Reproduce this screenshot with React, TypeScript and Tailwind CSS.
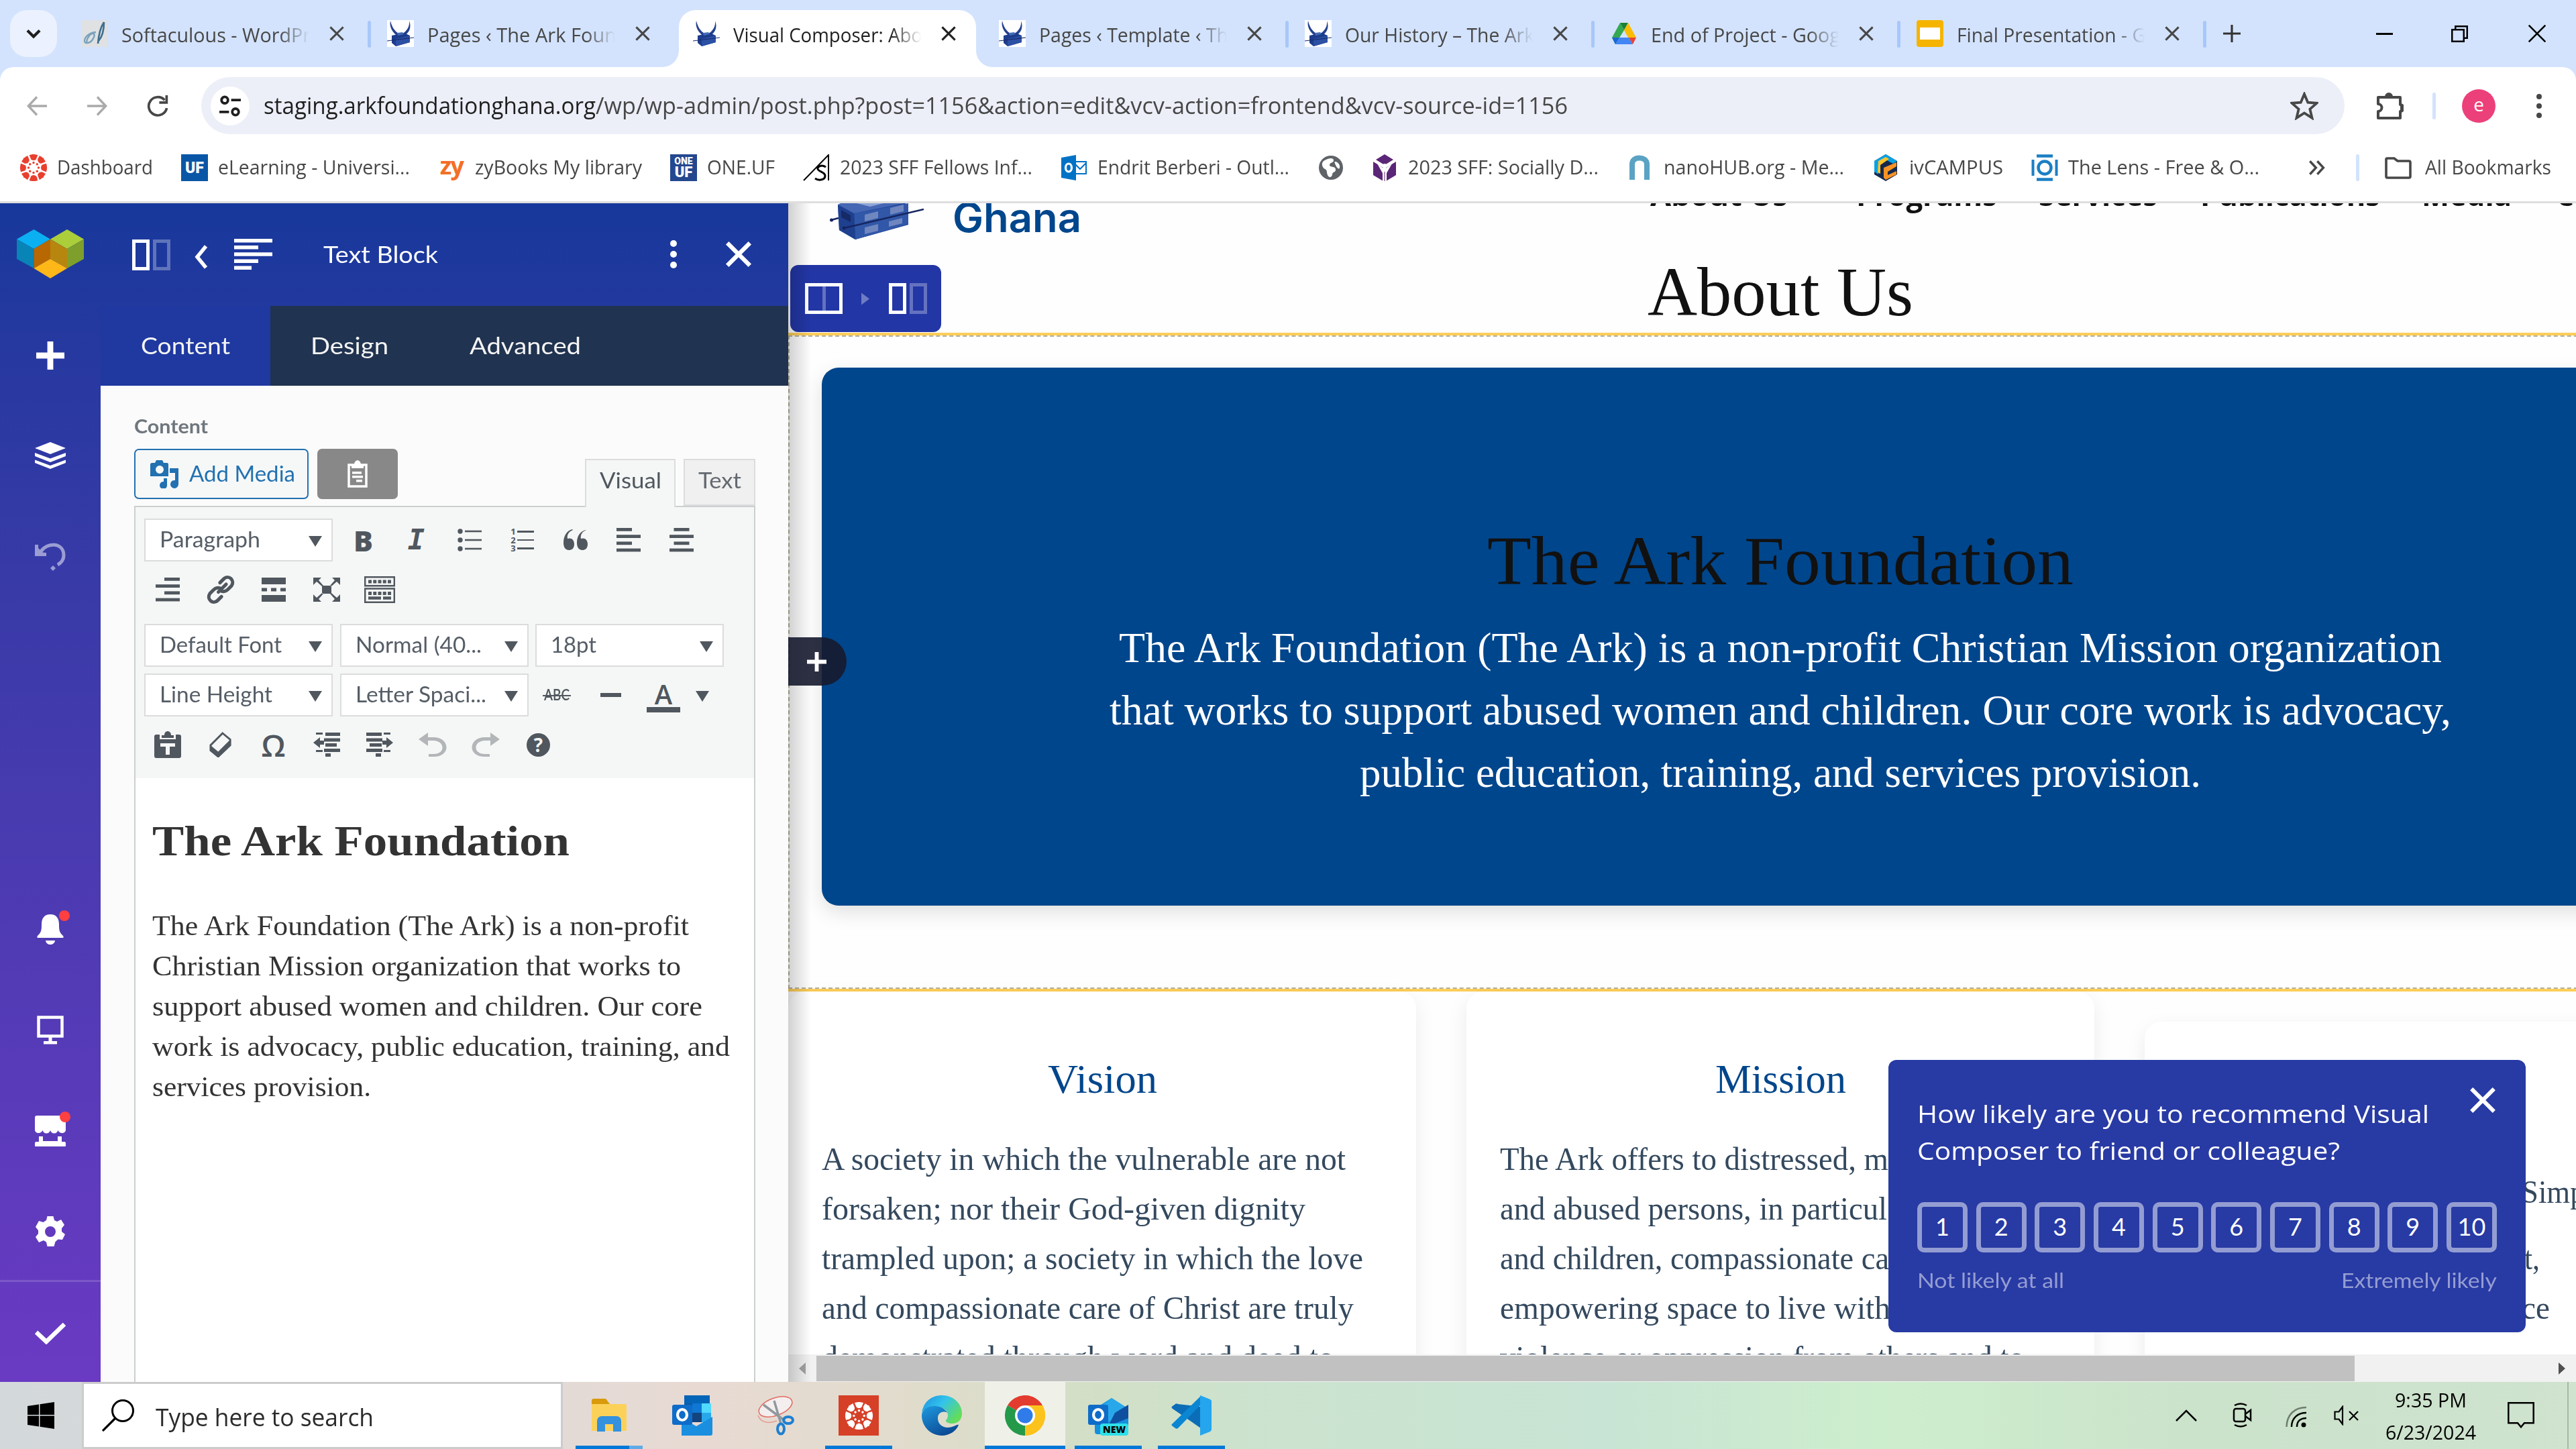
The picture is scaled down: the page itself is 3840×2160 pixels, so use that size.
import React, { useLayoutEffect, useRef } from "react";

const SEGOE = "font-['Open_Sans','Noto_Sans',sans-serif]";
const NUNITO = "font-['Lato','Open_Sans',sans-serif]";
const SERIF = "font-['Liberation_Serif',serif]";

type Kids = { className?: string; children?: React.ReactNode };

/* One line of text stretched to the width of its box. */
function Fit({ className = "", children }: Kids) {
  const box = useRef<HTMLSpanElement>(null);
  const inner = useRef<HTMLSpanElement>(null);
  useLayoutEffect(() => {
    if (!box.current || !inner.current) return;
    inner.current.style.transform = "none";
    const natural = inner.current.getBoundingClientRect().width;
    const wanted = box.current.getBoundingClientRect().width;
    if (natural > 0) inner.current.style.transform = `scaleX(${wanted / natural})`;
  });
  return (
    <span ref={box} className={`block shrink-0 ${className}`}>
      <span ref={inner} className="inline-block origin-left whitespace-pre">{children}</span>
    </span>
  );
}

function Svg({ vb = "0 0 20 20", className = "", children }: Kids & { vb?: string }) {
  return (
    <svg viewBox={vb} className={`block shrink-0 ${className}`} fill="currentColor">{children}</svg>
  );
}

const X = ({ className = "", w = 2 }: { className?: string; w?: number }) => (
  <Svg className={className}>
    <path d="M2 2 18 18M18 2 2 18" stroke="currentColor" strokeWidth={w} fill="none" />
  </Svg>
);

/* ---------- browser chrome ---------- */

const Ark = ({ bg = true }: { bg?: boolean }) => (
  <Svg vb="0 0 40 40" className="size-[40px]">
    {bg && <rect width="40" height="40" fill="#fff" />}
    <path d="M5 1C3 9 7 18 17 25l2-4C10 16 7 9 5 1ZM33 1c1 8-3 15-11 20l1 4C33 20 37 11 33 1Z" fill="#24418f" />
    <path d="m7 23 18-4 9 4v10l-21 6-6-5Z" fill="#1d3c8c" />
    <path d="m13 28 21-5v10l-21 6Z" fill="#2b50a4" />
    <path d="M0 31 40 26" stroke="#16296b" strokeWidth="1.2" />
    <path d="m15 19 8-1 2 3-9 2Z" fill="#456bb8" />
  </Svg>
);

const Feather = () => (
  <Svg vb="0 0 40 40" className="size-[40px]">
    <rect width="40" height="40" fill="#dfe1e3" />
    <path d="M34 3C28 12 26 22 25 35M34 3c0 14-3 22-8 28" stroke="#3f6f8f" strokeWidth="2.6" fill="none" />
    <path d="M22 18c-8 0-16 6-17 12s8 5 12-1 3-9 0-9-9 7-9 13" stroke="#7ba3bd" strokeWidth="2.4" fill="none" />
  </Svg>
);

const Drive = () => (
  <Svg vb="0 0 40 40" className="size-[40px]">
    <path d="M14 4h12l-6 11Z" fill="#188038" />
    <path d="M14 4 2 26l5 10 13-21Z" fill="#34a853" />
    <path d="m26 4 12 22H26L20 15Z" fill="#fbbc04" />
    <path d="M2 26h11l-6 10Z" fill="#1967d2" />
    <path d="M13 26h14l6 10H7Z" fill="#4285f4" />
    <path d="M27 26h11l-5 10Z" fill="#ea4335" />
  </Svg>
);

const Slides = () => (
  <Svg vb="0 0 40 40" className="size-[40px]">
    <rect width="40" height="40" rx="4" fill="#f5b400" />
    <rect x="5" y="11" width="30" height="18" fill="#fff" />
  </Svg>
);

const tabs = [
  { icon: <Feather />, title: "Softaculous - WordPr", sep: true },
  { icon: <Ark />, title: "Pages ‹ The Ark Foun", sep: false },
  { icon: <Ark bg={false} />, title: "Visual Composer: Abo", sep: false, active: true },
  { icon: <Ark />, title: "Pages ‹ Template ‹ Th", sep: true },
  { icon: <Ark />, title: "Our History – The Ark", sep: true },
  { icon: <Drive />, title: "End of Project - Goog", sep: true },
  { icon: <Slides />, title: "Final Presentation - G", sep: true },
];

function TabStrip() {
  return (
    <div className="flex h-[100px] bg-[#d3e3fd] pl-[15px] text-[#474747]">
      <div className="mt-[15px] flex size-[70px] items-center justify-center rounded-[25px] bg-[#ebf1fe] text-[#1f1f1f]">
        <Svg className="size-[26px]">
          <path d="m3 6.500 7 7 7-7" fill="none" stroke="currentColor" strokeWidth="3.200" />
        </Svg>
      </div>
      <div className="ml-[15px] flex">
        {tabs.map((t, i) => (
          <div key={i} className="flex w-[456px] shrink-0">
            <div
              className={
                t.active
                  ? "relative mt-[15px] flex w-[443px] items-center rounded-t-[25px] bg-white pb-[15px] pl-[21px] text-[#1f1f1f]"
                  : "flex w-[443px] items-center pl-[21px]"
              }
            >
              {t.active && (
                <>
                  <Svg vb="0 0 25 25" className="absolute bottom-0 -left-[25px] size-[25px] text-white">
                    <path d="M25 0v25H0C14 25 25 14 25 0Z" />
                  </Svg>
                  <Svg vb="0 0 25 25" className="absolute -right-[25px] bottom-0 size-[25px] text-white">
                    <path d="M0 0v25h25C11 25 0 14 0 0Z" />
                  </Svg>
                </>
              )}
              {t.icon}
              <div className="ml-[20px] w-[280px] overflow-hidden [mask-image:linear-gradient(to_right,black_84%,transparent)]">
                <Fit className="mt-[4px] w-[282px] text-[29px] leading-[44px]">{t.title}</Fit>
              </div>
              <X className="ml-[29px] size-[24px]" w={2.5} />
            </div>
            {t.sep && <div className="mt-[31px] ml-[5px] h-[40px] w-[5px] rounded-full bg-[#a8c7fa]" />}
          </div>
        ))}
      </div>
      <div className="ml-[22px] flex items-center text-black">
        <Svg className="size-[26px] text-[#333]">
          <path d="M8.800 0h2.400v20H8.800zM0 8.800h20v2.400H0z" />
        </Svg>
        <div className="ml-[202px] h-[3px] w-[25px] bg-black" />
        <Svg className="ml-[87px] size-[25px]">
          <path d="M1 5h14v14H1zM5 5V1h14v14h-4" fill="none" stroke="currentColor" strokeWidth="2" />
        </Svg>
        <Svg className="ml-[90px] size-[26px]">
          <path d="m.5.500 19 19m0-19-19 19" fill="none" stroke="currentColor" strokeWidth="2" />
        </Svg>
      </div>
    </div>
  );
}

function Toolbar() {
  return (
    <div className="bg-[#d3e3fd]">
      <div className="flex h-[115px] items-center rounded-t-[20px] bg-white pl-[40px] text-[#474747]">
        <Svg className="size-[30px] text-[#aaaaaa]">
          <path d="M20 10H2M10 1 1.500 10l8.500 9" fill="none" stroke="currentColor" strokeWidth="2.200" />
        </Svg>
        <Svg className="ml-[60px] size-[30px] text-[#aaaaaa]">
          <path d="M0 10h18M10 1l8.500 9-8.500 9" fill="none" stroke="currentColor" strokeWidth="2.200" />
        </Svg>
        <Svg className="ml-[59px] size-[32px]">
          <path d="M16.500 4.500A8.500 8.500 0 1 0 18.500 12" fill="none" stroke="currentColor" strokeWidth="2.300" />
          <path d="M19.500 0v8h-8V5.700h5.700V0z" />
        </Svg>
        <div className="ml-[49px] flex h-[85px] w-[3195px] items-center rounded-full bg-[#eceff8] pl-[14px]">
          <div className="flex size-[58px] items-center justify-center rounded-full bg-white text-[#1f1f1f]">
            <Svg className="size-[32px]">
              <path d="M11 4.500h9M0 15.500h9" stroke="currentColor" strokeWidth="2.400" />
              <circle cx="5" cy="4.500" r="3" fill="none" stroke="currentColor" strokeWidth="2.400" />
              <circle cx="15" cy="15.500" r="3" fill="none" stroke="currentColor" strokeWidth="2.400" />
            </Svg>
          </div>
          <Fit className="mt-[-2px] ml-[21px] w-[495px] text-[34px] leading-[50px] text-[#1f1f1f]">staging.arkfoundationghana.org</Fit>
          <Fit className="mt-[-2px] w-[1449px] text-[34px] leading-[50px] text-[#474747]">
            /wp/wp-admin/post.php?post=1156&amp;action=edit&amp;vcv-action=frontend&amp;vcv-source-id=1156
          </Fit>
          <Svg className="ml-auto mr-[39px] size-[42px]">
            <path d="m10 1.500 2.500 6 6.300.5-4.800 4.200 1.500 6.300L10 15l-5.500 3.500L6 12.200 1.200 8l6.300-.5Z" fill="none" stroke="currentColor" strokeWidth="1.800" />
          </Svg>
        </div>
        <Svg vb="0 0 40 40" className="ml-[48px] size-[40px]">
          <path d="M2 7h33v11a5 5 0 0 1 0 10v10H2V28a5.500 5.500 0 0 0 0-11Z" fill="none" stroke="currentColor" strokeWidth="4" strokeLinejoin="round" />
          <path d="M12 6a6 6 0 0 1 12 0ZM35 17a6 6 0 0 1 0 12Z" />
        </Svg>
        <div className="ml-[43px] h-[40px] w-[5px] rounded-full bg-[#d3e3fd]" />
        <div className="ml-[39px] flex size-[50px] items-center justify-center rounded-full bg-[#ec407a] pb-[5px] text-[28px] leading-none text-white">e</div>
        <div className="ml-[61px] flex flex-col gap-[6px]">
          <div className="size-[8px] rounded-full bg-[#474747]" />
          <div className="size-[8px] rounded-full bg-[#474747]" />
          <div className="size-[8px] rounded-full bg-[#474747]" />
        </div>
      </div>
    </div>
  );
}

/* Ring of eight wedges with a dot inside each. */
const CanvasRing = ({ fg, hole, className }: { fg: string; hole: string; className: string }) => (
  <Svg vb="0 0 40 40" className={className}>
    <circle cx="20" cy="20" r="20" fill={fg} />
    <circle cx="20" cy="20" r="14" fill={hole} />
    {[0, 45, 90, 135, 180, 225, 270, 315].map((a) => (
      <g key={a} transform={`rotate(${a} 20 20)`}>
        <path d="M14.500 3.500a5.500 5.500 0 0 0 11 0L20 -1Z" fill={fg} />
        <circle cx="20" cy="12.500" r="1.700" fill={fg} />
        <path d="M20 -1V7" transform="rotate(22.5 20 20)" stroke={hole} strokeWidth="2.600" />
      </g>
    ))}
  </Svg>
);

const bookmarks: { icon: React.ReactNode; text?: string; w?: string }[] = [
  { icon: <CanvasRing fg="#e93f2e" hole="#fff" className="size-[40px]" />, text: "Dashboard", w: "w-[143px]" },
  {
    icon: <div className="flex size-[40px] shrink-0 items-center justify-center bg-[#0a56a6] font-['Roboto'] text-[23px] font-black leading-none text-white">UF</div>,
    text: "eLearning - Universi...",
    w: "w-[286px]",
  },
  {
    icon: <div className="flex size-[40px] shrink-0 items-center justify-center pb-[6px] font-['Open_Sans'] text-[36px] font-bold leading-none tracking-tighter text-[#f36f27]">zy</div>,
    text: "zyBooks My library",
    w: "w-[249px]",
  },
  {
    icon: (
      <div className="flex size-[40px] shrink-0 flex-col items-center justify-center bg-[#24488f] font-['Roboto'] font-black text-white">
        <span className="text-[14px] leading-[14px]">ONE</span>
        <span className="text-[22px] leading-[20px]">UF</span>
      </div>
    ),
    text: "ONE.UF",
    w: "w-[101px]",
  },
  {
    icon: (
      <Svg vb="0 0 40 40" className="size-[40px] text-black">
        <path d="M1 39 38 1v38" fill="none" stroke="currentColor" strokeWidth="2" />
        <path d="M34 19c-6-4-13-1-12 3s11 4 11 10-9 8-15 4" fill="none" stroke="currentColor" strokeWidth="3" />
      </Svg>
    ),
    text: "2023 SFF Fellows Inf...",
    w: "w-[287px]",
  },
  {
    icon: (
      <Svg vb="0 0 40 40" className="size-[40px]">
        <path d="M20 11h18v18H20z" fill="#fff" stroke="#0072c6" strokeWidth="2" />
        <path d="m21 14 8 8 9-9" fill="none" stroke="#0072c6" strokeWidth="2" />
        <path d="M1 5 23 1v38L1 35Z" fill="#0072c6" />
        <ellipse cx="12" cy="20" rx="4.500" ry="6" fill="none" stroke="#fff" strokeWidth="3.200" />
      </Svg>
    ),
    text: "Endrit Berberi - Outl...",
    w: "w-[286px]",
  },
  {
    icon: (
      <Svg vb="0 0 40 40" className="size-[40px]">
        <circle cx="20" cy="20" r="18" fill="#5f6368" />
        <path d="M9 10c8-5 15-5 15-1s-6 3-6 7 8 1 9 6-5 4-5 8-5 6-7 1 0-7-4-9-6-8-2-12Z" fill="#fff" />
        <path d="M27 11c4 1 7 5 6 9s-5-1-6-4-3-5 0-5Z" fill="#fff" />
      </Svg>
    ),
  },
  {
    icon: (
      <Svg vb="0 0 40 40" className="size-[40px]">
        <path d="m20 0 13 8-13 8L7 8ZM3 11l15 9v20L3 31Zm34 0-15 9v20l15-9Z" fill="#5b2677" />
        <path d="m9 14 11 8 11-8-8 14v12h-6V28Z" fill="#fff" />
        <circle cx="20" cy="17" r="3" fill="#fff" />
        <path d="M20 26v14" stroke="#5b2677" strokeWidth="1" />
      </Svg>
    ),
    text: "2023 SFF: Socially D...",
    w: "w-[284px]",
  },
  {
    icon: (
      <Svg vb="0 0 40 40" className="size-[40px]">
        <path d="M8 38V15C8 8 13 5.500 18.500 5.500S30 8 30 15v23" fill="none" stroke="#5aa3c4" strokeWidth="8" />
      </Svg>
    ),
    text: "nanoHUB.org - Me...",
    w: "w-[269px]",
  },
  {
    icon: (
      <Svg vb="0 0 40 40" className="size-[40px]">
        <path d="m20 0 17 10v20L20 40 3 30V10Z" fill="#16284d" />
        <path d="m20 0 17 10-6 4-11-6-11 8v14l-6-4V10Z" fill="#0aa2e3" />
        <path d="m9 10 11-6 5 3-13 9v13l-4-2Z" fill="#ffc52e" />
        <path d="m17 20 19-8v6l-13 8v5l13-6v5l-16 8-3-3Z" fill="#f79322" />
      </Svg>
    ),
    text: "ivCAMPUS",
    w: "w-[140px]",
  },
  {
    icon: (
      <Svg vb="0 0 40 40" className="size-[40px]">
        <path d="M8 2.500h24M8 37.500h24" stroke="#1b7fc4" strokeWidth="4.500" />
        <path d="M2.500 8v24M37.500 8v24" stroke="#1b7fc4" strokeWidth="4" />
        <circle cx="20" cy="20" r="9.500" fill="none" stroke="#1b7fc4" strokeWidth="4.500" />
      </Svg>
    ),
    text: "The Lens - Free & O...",
    w: "w-[285px]",
  },
];

function Bookmarks() {
  return (
    <div className="flex h-[85px] items-center bg-white pb-[15px] pl-[30px] text-[#474747]">
      {bookmarks.map((b, i) => (
        <div key={i} className={b.text ? "mr-[42px] flex items-center gap-[15px]" : "mr-[40px]"}>
          {b.icon}
          {b.text && <Fit className={`mt-[-2px] text-[29px] leading-[40px] ${b.w}`}>{b.text}</Fit>}
        </div>
      ))}
      <Svg className="ml-[32px] size-[26px]">
        <path d="m1 2.500 7 7.500-7 7.500M9.500 2.500l7 7.500-7 7.500" fill="none" stroke="currentColor" strokeWidth="2.600" />
      </Svg>
      <div className="ml-[44px] h-[40px] w-[5px] rounded-full bg-[#d3e3fd]" />
      <Svg vb="0 0 40 40" className="ml-[38px] size-[40px]">
        <path d="M2 7v26a2 2 0 0 0 2 2h32a2 2 0 0 0 2-2V12a2 2 0 0 0-2-2H19l-5-4H4a2 2 0 0 0-2 1Z" fill="none" stroke="currentColor" strokeWidth="3.600" />
      </Svg>
      <Fit className="mt-[-2px] ml-[20px] w-[188px] text-[29px] leading-[40px]">All Bookmarks</Fit>
    </div>
  );
}

/* ---------- Visual Composer ---------- */

function Sidebar() {
  return (
    <div className="flex w-[150px] shrink-0 flex-col items-center text-white">
      <Svg vb="0 0 100 73" className="mt-[39px] h-[73px] w-[100px]">
        <path d="M25.500 0 50 14.500 25.500 29 0 14.500Z" fill="#0bb0f2" />
        <path d="M75 0l25 14.500L75 29 50 14.500Z" fill="#abcf3a" />
        <path d="M0 14.500 25.500 29v29L0 44Z" fill="#0884b6" />
        <path d="M50 14.500V44L25.500 58V29Z" fill="#b86802" />
        <path d="M50 14.500 75 29v29L50 44Z" fill="#b7860f" />
        <path d="M100 14.500V44L75 58V29Z" fill="#7e9f2c" />
        <path d="M50 44 75 58 50 73 25.500 58Z" fill="#ffb818" />
      </Svg>
      <Svg className="mt-[94px] size-[42px]">
        <path d="M7.900 0h4.200v20H7.900zM0 7.900h20v4.200H0z" />
      </Svg>
      <Svg vb="0 0 46 40" className="mt-[108px] h-[40px] w-[46px]">
        <path d="m23 0 23 9-23 9L0 9Z" />
        <path d="m0 16 23 8.500L46 16v5l-23 9-23-9Zm0 10.500L23 35l23-8.500v4.500L23 40 0 31Z" />
      </Svg>
      <Svg vb="0 0 46 46" className="mt-[107px] size-[46px] opacity-50">
        <path d="M9 16C18 2 43 2 43 22c0 7-4 11-9 14" fill="none" stroke="currentColor" strokeWidth="5" />
        <path d="M0 6v17h17v-5L5 17V6Z" />
        <path d="M0 6v17h17Z" />
        <path d="m27 37 4 4-4 4-4-4Z" />
      </Svg>
      <div className="relative mt-[511px]">
        <Svg vb="0 0 40 46" className="h-[46px] w-[40px]">
          <path d="M20 0c9 0 13 6 13 15 0 10 1 12 6 17 1 2 1 3-1 3H2c-2 0-2-1-1-3 5-5 6-7 6-17C7 6 11 0 20 0ZM13 39h14c-1 8-13 8-14 0Z" />
        </Svg>
        <div className="absolute -top-[6px] -right-[9px] size-[16px] rounded-full bg-[#ff4040]" />
      </div>
      <Svg vb="0 0 40 43" className="mt-[105px] h-[43px] w-[40px]">
        <path d="M2.500 2.500h35v28h-35z" fill="none" stroke="currentColor" strokeWidth="4.500" />
        <path d="M17.500 32h5v6H30v4.500H10V38h7.500Z" />
      </Svg>
      <div className="relative mt-[106px]">
        <Svg vb="0 0 46 46" className="size-[46px]">
          <path d="M3 0h40a3 3 0 0 1 3 3v18c0 6-9 7-11.500 1-2 6-9.500 6-11.500 0-2 6-9.500 6-11.500 0C9 28 0 27 0 21V3a3 3 0 0 1 3-3ZM6 31h6v7h22v-7h6v8h4a2 2 0 0 1 2 2v4a1 1 0 0 1-1 1H1a1 1 0 0 1-1-1v-4a2 2 0 0 1 2-2h4Z" />
        </Svg>
        <div className="absolute -top-[6px] -right-[7px] size-[16px] rounded-full bg-[#ff4040]" />
      </div>
      <Svg vb="0 0 46 46" className="mt-[104px] size-[46px]">
        <path
          fillRule="evenodd"
          d="m18.500 0h9l1.500 6 4 2 6-3 5 8-4 5v5l5 4-4 8-6.500-.500-4 3.500-2 7h-10l-1.500-6.500-4-2.500L6 39l-5-8 4-5v-5L1 16l5-9 6.500 2L17 6ZM23 15a8 8 0 1 0 0 16 8 8 0 0 0 0-16Z"
        />
      </Svg>
      <div className="mt-[49px] h-[3px] w-full bg-white/15" />
      <Svg vb="0 0 46 32" className="mt-[61px] h-[32px] w-[46px]">
        <path d="M2 14 17 28 44 2" fill="none" stroke="currentColor" strokeWidth="6.500" />
      </Svg>
    </div>
  );
}

const Columns = () => (
  <div className="flex gap-[5px]">
    <div className="h-[46px] w-[26px] border-[5px] border-white" />
    <div className="h-[46px] w-[26px] border-[5px] border-white/30" />
  </div>
);

function Select({ w, children }: { w: string; children: React.ReactNode }) {
  return (
    <div className="flex h-[64px] w-[281px] shrink-0 items-center border-[2.500px] border-[#dcdcdc] bg-white pl-[21px] pr-[14px] text-[#555d66]">
      <Fit className={`mt-[-2px] text-[32px] leading-[44px] ${w}`}>{children}</Fit>
      <Svg vb="0 0 20 16" className="ml-auto mt-[4px] h-[16px] w-[20px] text-[#50575e]">
        <path d="M0 0h20L10 16Z" />
      </Svg>
    </div>
  );
}

const Cell = ({ className = "w-[79px]", children }: Kids) => (
  <div className={`flex h-[60px] shrink-0 items-center justify-center ${className}`}>{children}</div>
);

const Bars = ({ rows }: { rows: [number, number][] }) => (
  <Svg vb="0 0 36 36" className="size-[36px]">
    {rows.map(([x, w], i) => (
      <rect key={i} x={x} y={i * 10.2} width={w} height="4.800" />
    ))}
  </Svg>
);

function EditorToolbar() {
  return (
    <div className="h-[404px] bg-[#f5f7f6] text-[#50575e]">
      <div className="flex items-center pt-[17px] pl-[13px]">
        <Select w="w-[150px]">Paragraph</Select>
        <div className="ml-[6px] flex items-center">
          <Cell>
            <span className="font-['Open_Sans'] text-[43px] font-extrabold leading-none">B</span>
          </Cell>
          <Cell>
            <span className="font-['DejaVu_Sans_Mono'] text-[42px] font-bold italic leading-none">I</span>
          </Cell>
          <Cell>
            <Svg vb="0 0 36 36" className="size-[36px]">
              {[5, 18, 31].map((y) => (
                <g key={y}>
                  <circle cx="4" cy={y} r="3.700" />
                  <path d={`M11 ${y}h25`} stroke="currentColor" strokeWidth="2.600" />
                </g>
              ))}
            </Svg>
          </Cell>
          <Cell>
            <div className="flex items-center gap-[2px]">
              <div className="flex flex-col font-['Open_Sans'] text-[13px] font-bold leading-[12.500px]">
                <span>1</span>
                <span>2</span>
                <span>3</span>
              </div>
              <div className="flex flex-col gap-[10px]">
                <div className="h-[2.500px] w-[25px] bg-[#50575e]" />
                <div className="h-[2.500px] w-[25px] bg-[#50575e]" />
                <div className="h-[2.500px] w-[25px] bg-[#50575e]" />
              </div>
            </div>
          </Cell>
          <Cell>
            <Svg vb="0 0 38 32" className="h-[32px] w-[38px]">
              <path d="M15 1C8 4 6 9 7 14c5-2 10 1 10 8s-4 9-8 9c-5 0-8-4-8-11C1 10 6 2 14 0Zm20 0c-7 3-9 8-8 13 5-2 10 1 10 8s-4 9-8 9c-5 0-8-4-8-11 0-10 5-17 13-19Z" />
            </Svg>
          </Cell>
          <Cell>
            <Bars rows={[[0, 23], [0, 36], [0, 23], [0, 36]]} />
          </Cell>
          <Cell>
            <Bars rows={[[6.5, 23], [0, 36], [6.5, 23], [0, 36]]} />
          </Cell>
        </div>
      </div>
      <div className="mt-[12px] flex h-[60px] items-center pl-[8px]">
        <Cell>
          <Bars rows={[[13, 23], [0, 36], [13, 23], [0, 36]]} />
        </Cell>
        <Cell>
          <Svg className="size-[46px]">
            <path d="m8.500 11.500 5-5M9.500 5.500 12 3c3-3 7.500 1 5 4.500L14.500 10c-1.500 1.500-3.500 1.500-5 .5M10.500 14.500 8 17c-3 3-7.500-1-5-4.500L5.500 10c1.500-1.500 3.500-1.500 5-.5" fill="none" stroke="currentColor" strokeWidth="2.200" strokeLinecap="round" />
          </Svg>
        </Cell>
        <Cell>
          <Svg vb="0 0 36 36" className="size-[36px]">
            <path d="M0 0h36v10H0zM0 26h36v10H0zM0 15.500h8v5H0zm14 0h8v5h-8zm14 0h8v5h-8z" />
          </Svg>
        </Cell>
        <Cell>
          <Svg vb="0 0 40 36" className="h-[36px] w-[40px]">
            <path d="M13 12h14v12H13zM0 0h12L8 4l7 8-2 1-8-7-5 5Zm40 0H28l4 4-7 8 2 1 8-7 5 5ZM0 36h12l-4-4 7-8-2-1-8 7-5-5Zm40 0H28l4-4-7-8 2-1 8 7 5-5Z" />
          </Svg>
        </Cell>
        <Cell>
          <Svg vb="0 0 46 40" className="h-[40px] w-[46px]">
            <path d="M1.200 1.200h43.600v13H1.200zM1.200 18.500h43.600v20.300H1.200z" fill="none" stroke="currentColor" strokeWidth="2.400" />
            <path d="M6 8h34M6 25.500h34" stroke="currentColor" strokeWidth="5" strokeDasharray="5 2.250" />
            <path d="M6 32.500h19M28 32.500h12" stroke="currentColor" strokeWidth="4.500" />
          </Svg>
        </Cell>
      </div>
      <div className="mt-[21px] flex gap-[10.500px] pl-[13px]">
        <Select w="w-[182px]">Default Font</Select>
        <Select w="w-[188px]">Normal (40...</Select>
        <Select w="w-[68px]">18pt</Select>
      </div>
      <div className="mt-[10px] flex gap-[10.500px] pl-[13px]">
        <Select w="w-[168px]">Line Height</Select>
        <Select w="w-[195px]">Letter Spaci...</Select>
        <div className="flex items-center">
          <div className="relative ml-[13px]">
            <Fit className="w-[38px] text-[22px] font-semibold leading-[44px]">ABC</Fit>
            <div className="absolute top-[22px] -left-[2px] h-[2px] w-[42px] bg-[#50575e]" />
          </div>
          <div className="ml-[46px] h-[6px] w-[31px] bg-[#50575e]" />
          <div className="ml-[38px] flex w-[50px] flex-col items-center pt-[6px]">
            <span className="font-['Open_Sans'] text-[40px] font-semibold leading-[36px]">A</span>
            <div className="mt-[1px] h-[8px] w-[50px] bg-[#50575e]" />
          </div>
          <Svg vb="0 0 20 16" className="mt-[4px] ml-[23px] h-[16px] w-[20px]">
            <path d="M0 0h20L10 16Z" />
          </Svg>
        </div>
      </div>
      <div className="mt-[12px] flex h-[60px] items-center pl-[8px]">
        <Cell>
          <Svg vb="0 0 40 40" className="size-[40px]">
            <path fillRule="evenodd" d="M3 5h5v7h24V5h5c2 0 3 1 3 3v29c0 2-1 3-3 3H3c-2 0-3-1-3-3V8c0-2 1-3 3-3Zm6 13v5h8v12h6V23h8v-5Z" />
            <path d="M11 10V6h4c0-8 10-8 10 0h4v4Z" />
          </Svg>
        </Cell>
        <Cell>
          <Svg vb="0 0 36 40" className="h-[38px] w-[34px]">
            <path d="M21 2 33 12v9L14 39 2 29v-8Z" fill="none" stroke="currentColor" strokeWidth="3" />
            <path d="M2 21l12 10v8L2 29ZM14 31 33 12v9L14 39Z" />
          </Svg>
        </Cell>
        <Cell>
          <span className="font-['Open_Sans'] text-[46px] font-semibold leading-none">Ω</span>
        </Cell>
        <Cell>
          <Svg vb="0 0 40 36" className="h-[36px] w-[40px]">
            <path d="M18 0h22v5H18zM16 8.500h24v5H16zM18 16h17v5H18zM16 24h24v5H16zM18 31h8v5h-8zM4 0h10v3H4zM4 26h10v3H4zM0 15l10-8v5h6v6h-6v5Z" />
          </Svg>
        </Cell>
        <Cell>
          <Svg vb="0 0 40 36" className="h-[36px] w-[40px]">
            <path d="M0 0h23v5H0zM0 8.500h24v5H0zM5 16h18v5H5zM0 24h24v5H0zM14 31h8v5h-8zM26 0h10v3H26zM26 26h10v3H26zM40 15 30 7v5h-6v6h6v5Z" />
          </Svg>
        </Cell>
        <Cell>
          <Svg vb="0 0 42 36" className="h-[36px] w-[42px] opacity-40">
            <path d="M0 10 14 0v7h8c25 0 27 29 0 29h-7v-4h7c19 0 17-20 0-20h-8v8Z" />
          </Svg>
        </Cell>
        <Cell>
          <Svg vb="0 0 42 36" className="h-[36px] w-[42px] opacity-40">
            <path d="M42 10 28 0v7h-8c-25 0-27 29 0 29h7v-4h-7c-19 0-17-20 0-20h8v8Z" />
          </Svg>
        </Cell>
        <Cell>
          <div className="flex size-[35px] items-center justify-center rounded-full bg-[#50575e] font-['Open_Sans'] text-[28px] font-bold leading-none text-[#f5f7f6]">?</div>
        </Cell>
      </div>
    </div>
  );
}

const georgia = `text-[43px] leading-[60px] ${SERIF}`;

function Panel() {
  return (
    <div className={`flex w-[1025px] shrink-0 flex-col ${NUNITO}`}>
      <div className="flex h-[153px] items-center pl-[47px] text-white">
        <Columns />
        <Svg vb="0 0 20 36" className="ml-[36px] mt-[6px] h-[36px] w-[20px]">
          <path d="M17 2 4 18l13 16" fill="none" stroke="currentColor" strokeWidth="5.500" />
        </Svg>
        <Svg vb="0 0 57 46" className="ml-[39px] mt-[-2px] h-[46px] w-[57px]">
          <path d="M0 0h57v5.500H0zM0 10h36v5.500H0zM0 20.200h57v5.500H0zM0 30.400h36v5.500H0zM0 40.500h26V46H0z" />
        </Svg>
        <Fit className="mt-[-4px] ml-[76px] w-[171px] text-[35px] leading-[50px]">Text Block</Fit>
        <div className="mt-[-2px] ml-[346px] flex flex-col gap-[6px]">
          <div className="size-[10px] rounded-full bg-white" />
          <div className="size-[10px] rounded-full bg-white" />
          <div className="size-[10px] rounded-full bg-white" />
        </div>
        <X className="mt-[-2px] ml-[71px] size-[42px]" w={3} />
      </div>
      <div className="flex h-[119px] items-center bg-[#203350] text-[35px] leading-[50px] text-[#f4f4f4]">
        <div className="flex h-full w-[253px] items-center bg-[#1f39a0] pl-[60px]">
          <Fit className="mt-[-4px] w-[133px]">Content</Fit>
        </div>
        <Fit className="mt-[-4px] ml-[60px] w-[116px]">Design</Fit>
        <Fit className="mt-[-4px] ml-[121px] w-[166px]">Advanced</Fit>
      </div>
      <div className="flex h-[1485px] flex-col bg-[#fbfbfb] pl-[50px]">
        <Fit className="mt-[40px] mb-[1px] w-[110px] text-[29px] font-bold leading-[40px] text-[#6f767d]">Content</Fit>
        <div className="flex h-[98px]">
          <div className="mt-[13px] flex h-[75px] w-[260px] items-center rounded-[7px] border-[2.500px] border-[#2271b1] bg-[#f6f8f8] pl-[22px] text-[#2271b1]">
            <Svg vb="0 0 42 42" className="size-[42px]">
              <path fillRule="evenodd" d="M3 4h4l2-4h9l2 4h5a2 2 0 0 1 2 2v18H0V6c0-1 1-2 3-2Zm11 4a6 6 0 1 0 0 12 6 6 0 0 0 0-12Z" />
              <path d="M29 12h13v24a6 6 0 1 1-5-6V19h-8ZM20 27h5v10a5.500 5.500 0 1 1-5-5Z" />
            </Svg>
            <Fit className="mt-[-2px] ml-[16px] w-[158px] text-[32px] leading-[44px]">Add Media</Fit>
          </div>
          <div className="mt-[13px] ml-[13px] flex h-[75px] w-[120px] items-center justify-center rounded-[7px] bg-[#888]">
            <Svg vb="0 0 30 42" className="h-[42px] w-[30px] text-white">
              <path d="M2 7h26v32H2z" fill="none" stroke="currentColor" strokeWidth="3.500" />
              <path d="M6 12V7h4c0-9 10-9 10 0h4v5ZM7 17h14v3.500H7zM7 23h16v3.500H7zM13 29h9v3.500h-9z" />
            </Svg>
          </div>
          <div className="relative z-10 mt-[28px] ml-[279px] flex h-[72px] w-[135px] justify-center border-[2.500px] border-b-0 border-[#dcdcde] bg-[#f5f7f6] pt-[8px] text-[#50575e]">
            <Fit className="w-[92px] text-[32px] leading-[44px]">Visual</Fit>
          </div>
          <div className="mt-[28px] ml-[12px] flex h-[70px] w-[107px] justify-center border-[2.500px] border-[#dcdcde] bg-[#f0f0f0] pt-[8px] text-[#646970]">
            <Fit className="w-[64px] text-[32px] leading-[44px]">Text</Fit>
          </div>
        </div>
        <div className="flex h-[1306px] w-[926px] flex-col border-x-[2.500px] border-t-[2.500px] border-[#cccfcf] bg-white">
          <EditorToolbar />
          <div className={`flex flex-col pl-[25px] text-[#333] ${SERIF}`}>
            <Fit className="mt-[49px] w-[622px] text-[63px] font-bold leading-[90px]">The Ark Foundation</Fit>
            <div className="mt-[51px] flex flex-col">
              <Fit className={`w-[800px] ${georgia}`}>The Ark Foundation (The Ark) is a non-profit</Fit>
              <Fit className={`w-[788px] ${georgia}`}>Christian Mission organization that works to</Fit>
              <Fit className={`w-[820px] ${georgia}`}>support abused women and children. Our core</Fit>
              <Fit className={`w-[861px] ${georgia}`}>work is advocacy, public education, training, and</Fit>
              <Fit className={`w-[326px] ${georgia}`}>services provision.</Fit>
            </div>
          </div>
        </div>
      </div>
    </div>
  );
}

/* ---------- edited page ---------- */

const navItems = [
  { t: "About Us", c: "w-[205px] mr-[102px]" },
  { t: "Programs", c: "w-[210px] mr-[62px]" },
  { t: "Services", c: "w-[177px] mr-[64px]" },
  { t: "Publications", c: "w-[268px] mr-[62px]" },
  { t: "Media", c: "w-[134px] mr-[66px]" },
  { t: "Contact", c: "w-[165px]" },
];

const cardLine = "leading-[74.1px]";

function Survey() {
  return (
    <div className="absolute top-[1277px] right-[75px] h-[406px] w-[950px] rounded-[12px] bg-[#283aa4] px-[43px] text-white">
      <div className="flex items-start justify-between">
        <div className="mt-[52px] font-['Open_Sans',sans-serif] text-[37px] font-medium leading-[55px]">
          <Fit className="w-[763px]">How likely are you to recommend Visual</Fit>
          <Fit className="w-[630px]">Composer to friend or colleague?</Fit>
        </div>
        <X className="mt-[39px] size-[42px]" w={2.8} />
      </div>
      <div className={`mt-[50px] flex justify-between text-[36px] leading-none ${NUNITO}`}>
        {[1, 2, 3, 4, 5, 6, 7, 8, 9, 10].map((n) => (
          <div key={n} className="flex size-[75px] items-center justify-center rounded-[10px] border-[7px] border-[#949dd2] pb-[4px]">{n}</div>
        ))}
      </div>
      <div className={`mt-[20px] flex justify-between text-[31px] leading-[42px] text-[#949dd2] ${NUNITO}`}>
        <Fit className="w-[219px]">Not likely at all</Fit>
        <Fit className="w-[232px]">Extremely likely</Fit>
      </div>
    </div>
  );
}

function Page() {
  return (
    <div className={`relative flex w-[2665px] shrink-0 flex-col overflow-hidden bg-[#fefefe] ${SERIF}`}>
      <div className="h-[1716px] w-[2958px] overflow-hidden">
        <div className="flex h-[72px] items-start overflow-hidden pl-[62px]">
          <Svg vb="0 0 140 54" className="h-[54px] w-[140px]">
            <path d="m12 2 20-2h80l5 2v30L38 54 14 40Z" fill="#1d3f92" />
            <path d="m36 15 81-15v31L38 54Z" fill="#3157a8" />
            <path d="m12 2 24 13 2 39-24-14Z" fill="#1f3f8f" />
            <path d="m12 2 4-2h95L36 15Z" fill="#4567b4" />
            <path d="M40 0h40L60 5Z" fill="#8fa5d8" />
            <path d="m52 17 20-5v10l-20 5Zm38-10 20-5v10L90 17ZM52 36l20-5v10l-20 5Zm36-9 20-5v8l-20 5Z" fill="#6f86bf" />
            <path d="m17 10 14 8v10l-14-7Z" fill="#152a66" />
            <path d="M2 25 13 22M21 37 140 9" stroke="#15255f" strokeWidth="2.500" />
            <circle cx="2.500" cy="25" r="2.500" fill="#15255f" />
            <circle cx="21" cy="37" r="2.500" fill="#15255f" />
          </Svg>
          <Fit className="ml-[43px] mt-[-19px] w-[192px] font-['Inter'] text-[60px] font-semibold leading-[80px] text-[#00468c]">Ghana</Fit>
          <div className="ml-[848px] mt-[-33px] flex font-['Open_Sans'] text-[44px] font-bold leading-[40px] text-[#111]">
            {navItems.map((n) => (
              <Fit key={n.t} className={n.c}>{n.t}</Fit>
            ))}
          </div>
        </div>
        <div className="relative flex h-[121px] items-center justify-center">
          <div className="absolute top-[20px] left-[3px] flex h-[100px] w-[225px] items-center rounded-[12px] bg-[#2236a5] pl-[22px]">
            <div className="flex h-[46px] w-[56px] justify-center border-[5px] border-white">
              <div className="w-[5px] bg-white/30" />
            </div>
            <Svg vb="0 0 12 18" className="ml-[28px] h-[19px] w-[12px] text-white/35">
              <path d="M0 0 12 9 0 18Z" />
            </Svg>
            <div className="ml-[29px]">
              <Columns />
            </div>
          </div>
          <Fit className="w-[396px] text-[103px] leading-[121px] text-[#111]">About Us</Fit>
        </div>
        <div className="flex h-[982px] flex-col border-t-[4px] border-b-[4px] border-[#fccd58]">
          <div className="flex h-[974px] flex-col border-[2px] border-dashed border-[#b5b09c] px-[48px] pt-[46px]">
            <div className="flex h-[802px] flex-col items-center rounded-[25px] bg-[#00468c] pt-[228px] shadow-[0_10px_30px_rgba(0,0,0,0.12)]">
              <Fit className="w-[874px] text-[103px] leading-[120px] text-[#111]">The Ark Foundation</Fit>
              <div className="mt-[23px] flex flex-col items-center text-[64px] leading-[93px] text-white">
                <Fit className="w-[1972px]">The Ark Foundation (The Ark) is a non-profit Christian Mission organization</Fit>
                <Fit className="w-[2000px]">that works to support abused women and children. Our core work is advocacy,</Fit>
                <Fit className="w-[1254px]">public education, training, and services provision.</Fit>
              </div>
            </div>
          </div>
        </div>
        <div className="flex gap-[75px] text-[48px] text-[#34495e]">
          <div className="h-[700px] w-[936px] shrink-0 rounded-t-[25px] bg-white px-[50px] pt-[90px] shadow-[0_10px_30px_rgba(0,0,0,0.08)]">
            <Fit className="mx-auto w-[163px] text-[62px] leading-[80px] text-[#00468c]">Vision</Fit>
            <div className="mt-[43px]">
              <Fit className={`w-[781px] ${cardLine}`}>A society in which the vulnerable are not</Fit>
              <Fit className={`w-[721px] ${cardLine}`}>forsaken; nor their God-given dignity</Fit>
              <Fit className={`w-[807px] ${cardLine}`}>trampled upon; a society in which the love</Fit>
              <Fit className={`w-[793px] ${cardLine}`}>and compassionate care of Christ are truly</Fit>
              <Fit className={`w-[764px] ${cardLine}`}>demonstrated through word and deed to</Fit>
            </div>
          </div>
          <div className="h-[700px] w-[936px] shrink-0 rounded-t-[25px] bg-white px-[50px] pt-[90px] shadow-[0_10px_30px_rgba(0,0,0,0.08)]">
            <Fit className="mx-auto w-[195px] text-[62px] leading-[80px] text-[#00468c]">Mission</Fit>
            <div className="mt-[43px]">
              <Fit className={`w-[579px] ${cardLine}`}>The Ark offers to distressed, m</Fit>
              <Fit className={`w-[577px] ${cardLine}`}>and abused persons, in particul</Fit>
              <Fit className={`w-[580px] ${cardLine}`}>and children, compassionate ca</Fit>
              <Fit className={`w-[582px] ${cardLine}`}>empowering space to live with</Fit>
              <Fit className={`w-[782px] ${cardLine}`}>violence or oppression from others and to</Fit>
            </div>
          </div>
          <div className="mt-[45px] h-[700px] w-[800px] shrink-0 rounded-t-[25px] bg-white pt-[217px] pl-[562px] shadow-[0_10px_30px_rgba(0,0,0,0.08)]">
            <Fit className={`w-[107px] ${cardLine}`}>Simpl</Fit>
            <Fit className={`mt-[25px] ml-[4px] w-[23px] ${cardLine}`}>t,</Fit>
            <Fit className={`w-[42px] ${cardLine}`}>ce</Fit>
          </div>
        </div>
      </div>
      <div className="flex h-[41px] items-center bg-[#f1f1f1]">
        <Svg vb="0 0 10 18" className="ml-[16px] h-[18px] w-[10px] text-[#a3a3a3]">
          <path d="M10 0v18L0 9Z" />
        </Svg>
        <div className="ml-[16px] h-[38px] w-[2293px] bg-[#c1c1c1]" />
        <Svg vb="0 0 10 18" className="ml-[304px] h-[18px] w-[10px] text-[#505050]">
          <path d="M0 0v18l10-9Z" />
        </Svg>
      </div>
      <div className="absolute inset-y-0 left-0 w-[34px] bg-linear-to-r from-black/18 to-transparent" />
      <div className="absolute top-[647px] left-0 flex h-[72px] w-[87px] items-center rounded-r-[36px] bg-[#161a2e]/90 pl-[28px] text-white">
        <Svg className="size-[29px]">
          <path d="M8 0h4v20H8zM0 8h20v4H0z" />
        </Svg>
      </div>
      <Survey />
    </div>
  );
}

/* ---------- taskbar ---------- */

const OutlookIcon = ({ fresh = false }: { fresh?: boolean }) => (
  <Svg vb="0 0 60 60" className="size-[60px]">
    {fresh ? (
      <>
        <path d="M35 4 60 20v34a4 4 0 0 1-4 4H14a4 4 0 0 1-4-4V20Z" fill="#1490df" />
        <path d="M35 4 60 20 30 40 10 24Z" fill="#28a8ea" />
        <path d="M40 26 60 14v20L30 46Z" fill="#0f4fa0" />
      </>
    ) : (
      <>
        <path d="M18 0h38v12H18z" fill="#0364b8" />
        <path d="M18 12h12v24H18z" fill="#0a5ba8" />
        <path d="M30 12h14v14H30z" fill="#0f78d4" />
        <path d="M44 12h14v14H44z" fill="#50d9ff" />
        <path d="M30 26h14v14H30z" fill="#14447d" />
        <path d="M44 26h14v14H44z" fill="#28a8ea" />
        <path d="M14 60V34l22 12 24-14v25a3 3 0 0 1-3 3Z" fill="#1a8fe0" />
      </>
    )}
    <rect x="0" y="14" width="30" height="30" rx="3" fill="#0f6cc8" />
    <ellipse cx="15" cy="29" rx="7" ry="8" fill="none" stroke="#fff" strokeWidth="4.200" />
  </Svg>
);

const apps: { icon: React.ReactNode; bar?: string; bg?: string }[] = [
  {
    bar: "w-[100px] bg-linear-to-r from-[#0078d7] from-80% to-[#5fabe6] to-80%",
    icon: (
      <Svg vb="0 0 60 60" className="size-[60px]">
        <path d="M4 8a3 3 0 0 1 3-3h18l6 8H4Z" fill="#d99a0b" />
        <path d="M4 13h50a2 2 0 0 1 2 2v38H4Z" fill="#fcd15a" />
        <path d="M12 54V38a7 7 0 0 1 7-7h22a7 7 0 0 1 7 7v16H36V43H24v11Z" fill="#3391dd" />
      </Svg>
    ),
  },
  { icon: <OutlookIcon /> },
  {
    icon: (
      <Svg vb="0 0 60 60" className="size-[60px]">
        <ellipse cx="30" cy="17" rx="26" ry="13" transform="rotate(-20 30 17)" fill="#f4eeee" stroke="#e26b62" strokeWidth="1.500" />
        <path d="M4 30c4 12 18 12 28 8" fill="none" stroke="#e79a93" strokeWidth="1.500" />
        <path d="m12 14 32 24M28 8l10 34" stroke="#90989e" strokeWidth="3.500" />
        <ellipse cx="49" cy="37" rx="7" ry="5" fill="none" stroke="#1d7fd1" strokeWidth="4" />
        <ellipse cx="38" cy="50" rx="5" ry="7.500" fill="none" stroke="#1d7fd1" strokeWidth="4" />
      </Svg>
    ),
  },
  {
    bar: "w-[100px] bg-[#0078d7]",
    icon: (
      <div className="flex size-[60px] items-center justify-center bg-[#d64027]">
        <CanvasRing fg="#fff" hole="#d64027" className="size-[41px]" />
      </div>
    ),
  },
  {
    icon: (
      <Svg vb="0 0 60 60" className="size-[60px]">
        <defs>
          <linearGradient id="edgeTop" x1="0" y1="0" x2="1" y2="0.600">
            <stop offset="0" stopColor="#1b8fe0" />
            <stop offset="0.500" stopColor="#33c3ec" />
            <stop offset="1" stopColor="#63dd5a" />
          </linearGradient>
          <linearGradient id="edgeLow" x1="0" y1="0" x2="0.600" y2="1">
            <stop offset="0" stopColor="#1d9ae0" />
            <stop offset="1" stopColor="#0c4a94" />
          </linearGradient>
        </defs>
        <path d="M0 26C3 8 16 0 30 0c18 0 30 13 30 27 0 10-7 15-14 15-6 0-10-2-10-4s3-3 3-8c0-8-8-13-17-13C10 17 2 21 0 26Z" fill="url(#edgeTop)" />
        <path d="M0 30c0-8 8-14 19-14 9 0 16 4 19 10-4-3-14-2-14 8 0 12 12 17 24 12 3-1 6-3 7-2-3 9-14 16-25 16C13 60 0 46 0 30Z" fill="url(#edgeLow)" />
      </Svg>
    ),
  },
  {
    bg: "bg-[#eff1e8]",
    bar: "w-[120px] bg-[#0078d7]",
    icon: (
      <Svg vb="0 0 60 60" className="size-[60px]">
        <path d="M30 30 4 15A30 30 0 0 1 56 15Z" fill="#e33b2e" />
        <path d="M30 30 56 15A30 30 0 0 1 30 60Z" fill="#fcc31d" />
        <path d="M30 30v30A30 30 0 0 1 4 15Z" fill="#24994a" />
        <path d="M30 15h26a30 30 0 0 1-26 45l13-22Z" fill="#fcc31d" />
        <circle cx="30" cy="30" r="15" fill="#fff" />
        <circle cx="30" cy="30" r="11.500" fill="#2f7bea" />
      </Svg>
    ),
  },
  {
    bar: "w-[100px] bg-[#0078d7]",
    icon: (
      <div className="relative">
        <OutlookIcon fresh />
        <div className="absolute right-0 bottom-0 flex h-[18px] w-[42px] items-center justify-center rounded-[4px] bg-[#2fe0e8] font-['Open_Sans'] text-[14px] font-extrabold leading-none text-black">NEW</div>
      </div>
    ),
  },
  {
    bar: "w-[100px] bg-[#0078d7]",
    icon: (
      <Svg vb="0 0 60 60" className="size-[60px]">
        <path d="M44 14v32L2 17c-2-2-2-3 0-4l4-3c1-1 2-1 4 0Z" fill="#0b6db8" transform="translate(0 3)" />
        <path d="M44 14 10 49c-1 1-3 1-4 0l-4-3c-2-1-2-3 0-4L44 1Z" fill="#0a86d2" />
        <path d="M43 0 58 6c1 1 2 1 2 3v42c0 1-1 2-2 3l-15 6Z" fill="#24a5ee" />
      </Svg>
    ),
  },
];

function Taskbar() {
  return (
    <div className={`flex h-[100px] bg-[linear-gradient(90deg,#d3d8da_0px,#dcdad9_500px,#e8dad3_1050px,#dfdccb_1400px,#d2dfc6_1640px,#cbe3cf_1900px,#c8e4d4_2400px,#cdeecd_2800px,#cbe2cb_3300px,#cfe3ce_3840px)] text-[#222] ${SEGOE}`}>
      <div className="flex w-[122px] items-center justify-center">
        <Svg vb="0 0 40 40" className="size-[40px] text-black">
          <path d="M0 6 17 3.500V19H0ZM18.500 3.200 40 0v19H18.500ZM0 20.500h17v16L0 34Zm18.500 0H40V40l-21.500-3.200Z" />
        </Svg>
      </div>
      <div className="flex h-[100px] w-[717px] items-center border-[3px] border-[#cccccc] bg-white pl-[27px]">
        <Svg vb="0 0 48 48" className="size-[48px] text-black">
          <circle cx="31" cy="17" r="15.500" fill="none" stroke="currentColor" strokeWidth="3" />
          <path d="M20 28 1 47" stroke="currentColor" strokeWidth="3.200" />
        </Svg>
        <Fit className="ml-[32px] mt-[5px] w-[325px] text-[36px] leading-[50px] text-[#2b2b2b]">Type here to search</Fit>
      </div>
      <div className="ml-[9px] flex">
        {apps.map((a, i) => (
          <div key={i} className={`mr-[4px] flex h-[100px] w-[120px] flex-col items-center justify-between pt-[20px] ${a.bg ?? ""}`}>
            {a.icon}
            {a.bar && <div className={`h-[5px] ${a.bar}`} />}
          </div>
        ))}
      </div>
      <div className="ml-auto flex items-center text-black">
        <Svg vb="0 0 32 18" className="h-[18px] w-[32px]">
          <path d="m1 17 15-15 15 15" fill="none" stroke="currentColor" strokeWidth="2.500" />
        </Svg>
        <Svg vb="0 0 32 38" className="ml-[52px] h-[38px] w-[32px]">
          <rect x="3" y="9" width="17" height="19" rx="3" fill="none" stroke="currentColor" strokeWidth="2.500" />
          <path d="m20 17 8-6v15l-8-6M4 4q9-5 18 0M4 33q9 5 18 0" fill="none" stroke="currentColor" strokeWidth="2.500" />
        </Svg>
        <Svg vb="0 0 32 32" className="ml-[48px] mt-[4px] h-[32px] w-[32px]">
          <circle cx="27" cy="28" r="3.500" />
          <path d="M17 31C17 23 22 18 31 18M9 31C9 18 18 10 31 10" fill="none" stroke="currentColor" strokeWidth="2.500" />
          <path d="M1.500 31C2 13 13 2 31 2" fill="none" stroke="currentColor" strokeWidth="2.500" opacity="0.450" />
        </Svg>
        <Svg vb="0 0 38 30" className="ml-[40px] h-[30px] w-[38px]">
          <path d="M1.500 9.500h6L13 2v26l-5.500-7.500h-6ZM23 9l13 13M36 9 23 22" fill="none" stroke="currentColor" strokeWidth="2.200" />
        </Svg>
        <div className="ml-[38px] flex w-[136px] flex-col items-center pt-[1px] text-[29px] leading-[48px]">
          <Fit className="w-[107px]">9:35 PM</Fit>
          <Fit className="w-[135px]">6/23/2024</Fit>
        </div>
        <Svg vb="0 0 40 40" className="ml-[47px] size-[40px]">
          <path d="M1.300 1.300h37.400v30H25l-5 6-5-6H1.300Z" fill="none" stroke="currentColor" strokeWidth="2.500" />
        </Svg>
        <div className="ml-[49px] mr-[11px] h-[100px] w-[2px] bg-[#a9b8a9]" />
      </div>
    </div>
  );
}

export default function App() {
  return (
    <div className={`flex h-[2160px] w-[3840px] flex-col overflow-hidden bg-white ${SEGOE}`}>
      <TabStrip />
      <Toolbar />
      <Bookmarks />
      <div className="h-[3px] bg-[#dedede]" />
      <div className="flex h-[1757px] bg-linear-to-b from-[#17389b] to-[#6a3ac3]">
        <Sidebar />
        <Panel />
        <Page />
      </div>
      <Taskbar />
    </div>
  );
}
